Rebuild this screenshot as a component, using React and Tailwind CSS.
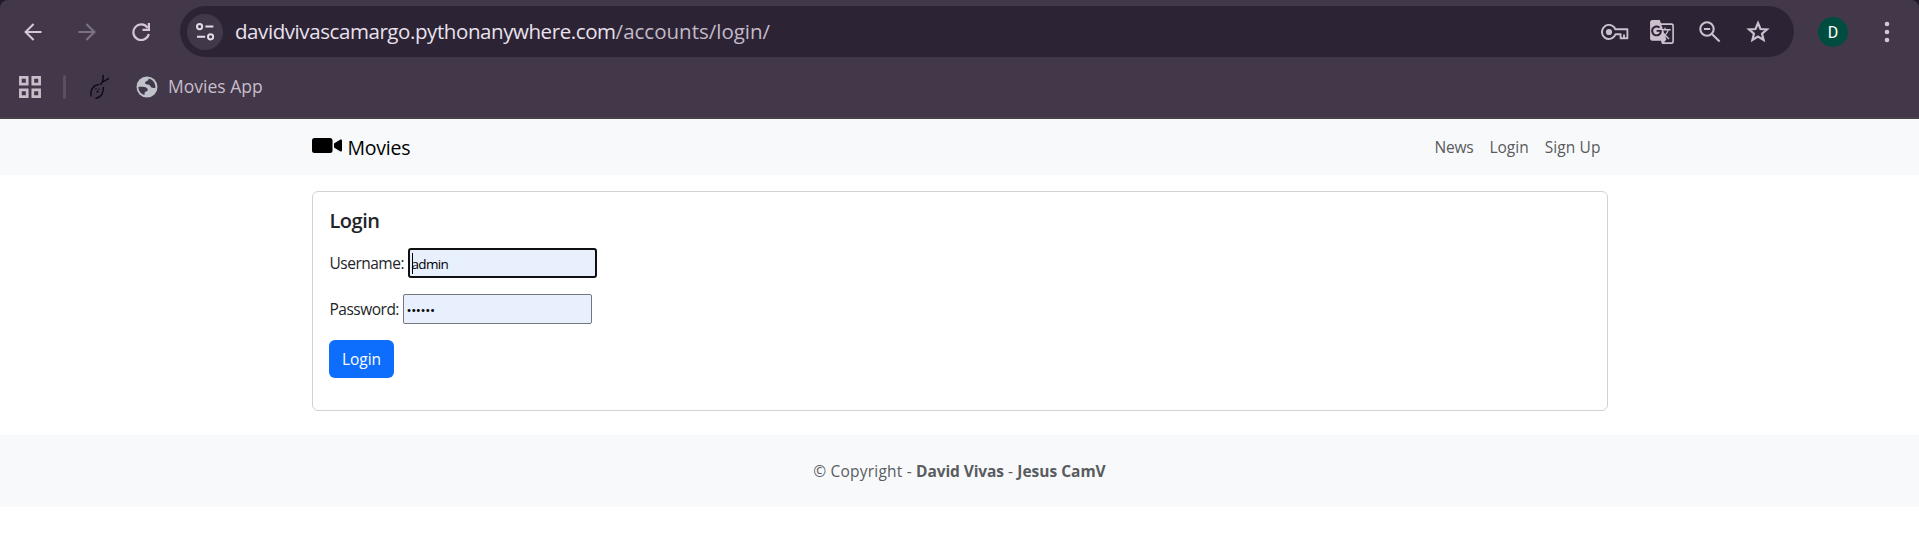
import { MdGTranslate } from 'react-icons/md';

const line = { fill: 'none', stroke: 'currentColor' };

function BackIcon({ className }) {
  return (
    <svg width="18" height="18" viewBox="0 0 18 18" className={className} {...line} strokeWidth="2.1">
      <path d="M17.5 9H2M9.6 1L1.6 9l8 8" />
    </svg>
  );
}

function ReloadIcon() {
  return (
    <svg width="18" height="18" viewBox="0 0 18 18" className="text-[#d5c5da]" {...line} strokeWidth="2.2">
      <path d="M15.6 4.8A7.8 7.8 0 1 0 16.8 11" />
      <path d="M16.9 0v6.9H10.5" />
    </svg>
  );
}

function TuneIcon() {
  return (
    <svg width="18" height="18" viewBox="0 0 18 18" {...line} strokeWidth="2">
      <circle cx="3.6" cy="3.6" r="2.6" />
      <path d="M9.4 3.6h8M1 13.8h8.2" />
      <circle cx="14.6" cy="13.8" r="2.6" />
    </svg>
  );
}

function KeyIcon() {
  return (
    <svg width="28" height="16" viewBox="0 0 28 16" {...line} strokeWidth="1.9" strokeLinejoin="round">
      <path d="M14.4 5.3H26.4V14.2H19.6V10.3H14.5A7 7 0 1 1 14.4 5.3Z" />
      <path d="M23 10.4v3.6" />
      <circle cx="8" cy="8" r="3.1" fill="currentColor" stroke="none" />
    </svg>
  );
}

function ZoomOutIcon() {
  return (
    <svg width="22" height="22" viewBox="0 0 22 22" {...line} strokeWidth="2.1">
      <circle cx="8" cy="8" r="6.7" />
      <path d="M12.9 12.9l7.7 7.7M4.9 8h6.2" />
    </svg>
  );
}

function StarIcon() {
  return (
    <svg width="24" height="23" viewBox="0 0 24 23" {...line} strokeWidth="2.2">
      <path d="M12 3l2.5 6 6.5.5-4.95 4.2 1.55 6.3L12 16.6 6.4 20l1.55-6.3L3 9.5 9.5 9z" />
    </svg>
  );
}

function AppsIcon() {
  return (
    <svg width="22" height="22" viewBox="0 0 22 22" {...line} strokeWidth="2.7">
      <path d="M1.4 1.4h6.8v6.8H1.4zM13.8 1.4h6.8v6.8h-6.8zM1.4 13.8h6.8v6.8H1.4zM13.8 13.8h6.8v6.8h-6.8z" />
    </svg>
  );
}

function SnakeIcon() {
  return (
    <svg width="22" height="26" viewBox="0 0 22 26" className="text-[#0d0a10]" {...line} strokeWidth="1.4" strokeLinecap="round">
      <path d="M3 21.8C2 16.8 4.6 11.6 10.6 10.4" />
      <path d="M15.3 13.4C15.8 18.6 13.4 23.4 8 24.3" />
      <path d="M15.2 1.5L14.8 7.2 12.6 10.4M20.5 4.6L14.8 8" />
      <path d="M8 14.6v.1M11 15.2v.1M9 17.7l1.2-.2" />
    </svg>
  );
}

function GlobeIcon() {
  return (
    <svg width="22" height="22" viewBox="0 0 22 22">
      <circle cx="11" cy="11" r="10.5" fill="#bfc3c9" />
      <path
        d="M12.6 2.5C12.9 4.2 11.2 5 9.9 5.6 8.6 6.4 8.9 7.9 10.2 8.3c2 .3 3.6.4 4.3 2 .4 1.4 1.9 1.9 4.8 1.6C19.9 7.4 17 3.6 12.6 2.5z"
        fill="#42384a"
      />
      <path
        d="M2.4 10.7h4.2c2.6 0 5 1 5.2 2.9.1 1.5-1.1 2-2.4 2.2-.9.3-.7 1.6-.9 3.2C4.7 17.8 2.3 14.6 2.4 10.7z"
        fill="#42384a"
      />
    </svg>
  );
}

function CameraIcon() {
  return (
    <svg width="30" height="15" viewBox="0 0 30 15" fill="#000">
      <rect width="20.5" height="15" rx="2.5" />
      <path d="M22 5.5L28 1.8c1-.6 2-.2 2 1v9.400c0 1.200-1 1.600-2 1L22 9.500z" />
    </svg>
  );
}

function BrowserBar() {
  return (
    <div className="h-[119px] bg-[#211a2b]">
      <header className="h-full rounded-t-[8px] border-b-2 border-[#4a4048] bg-[#42384a] pt-[6px]">
        <div className="flex h-[51px] items-center">
          <div className="flex w-[180px] items-center gap-9 pl-6 text-[#d5c5da]">
            <BackIcon />
            <BackIcon className="rotate-180 text-[#7c7284]" />
            <ReloadIcon />
          </div>
          <div className="flex h-full w-[1614px] items-center rounded-full bg-[#2c2435] pl-[7px] text-[#cbc0cc]">
            <div className="flex size-9 items-center justify-center rounded-full bg-[#42384a] text-[#e4dbe6]">
              <TuneIcon />
            </div>
            <div className="flex-1 pb-px pl-3 text-[20.5px] leading-7 whitespace-nowrap">
              <span className="tracking-[-0.42px] text-[#e9e1ec]">davidvivascamargo.pythonanywhere.com</span>
              <span className="text-[#c4bac8]">/accounts/login/</span>
            </div>
            <div className="flex items-center pr-[24px]">
              <KeyIcon />
              <MdGTranslate size={26} className="ml-5" />
              <div className="ml-6"><ZoomOutIcon /></div>
              <div className="ml-[25px]"><StarIcon /></div>
            </div>
          </div>
          <div className="ml-6 flex size-[30px] items-center justify-center rounded-full bg-[#004d40] pt-0.5 font-[Roboto] text-[16px] text-white">
            D
          </div>
          <svg width="6" height="22" viewBox="0 0 6 22" fill="#d5c5da" className="ml-[36px]">
            <circle cx="3" cy="3" r="2.3" />
            <circle cx="3" cy="11" r="2.3" />
            <circle cx="3" cy="19" r="2.3" />
          </svg>
        </div>
        <div className="flex h-[59px] items-center pl-[19px] text-[#c8bdc9]">
          <AppsIcon />
          <div className="ml-[22px] h-6 w-[3px] rounded-full bg-[#5a4f62]" />
          <div className="ml-[22px]"><SnakeIcon /></div>
          <div className="ml-[26px]"><GlobeIcon /></div>
          <span className="ml-[10px] pb-px text-[17.5px] leading-6">Movies App</span>
        </div>
      </header>
    </div>
  );
}

function Navbar() {
  return (
    <nav className="h-14 bg-[#f8f9fb]">
      <div className="mx-auto flex h-full w-[1296px] items-center justify-between">
        <a className="flex items-center text-black">
          <span className="mr-1.5 -mt-[3px]"><CameraIcon /></span>
          <span className="pt-0.5 text-[19.5px] tracking-[-0.25px]">Movies</span>
        </a>
        <div className="flex gap-4 pt-0.5 pr-[7px] text-[15.5px] text-[#595a5c]">
          <a className="tracking-[-0.2px]">News</a>
          <a>Login</a>
          <a className="tracking-[0.1px]">Sign Up</a>
        </div>
      </div>
    </nav>
  );
}

function LoginCard() {
  return (
    <section className="mx-auto mt-4 h-[220px] w-[1296px] rounded-md border border-[#d2d2d3] p-4 text-[#212529]">
      <h5 className="h-6 pt-px pl-px text-[20px] leading-6 font-semibold tracking-[-0.5px]">Login</h5>
      <div className="mt-4 flex items-center text-[15.5px]">
        <label className="w-[79px] pt-0.5 pl-px tracking-[-0.5px]">Username:</label>
        <div className="flex h-[30px] w-[189px] items-center rounded-[3px] border-2 border-[#101010] bg-[#e8f0fe] pl-[2px] text-[13.5px] text-black">
          <span className="h-[21px] w-px bg-black" />
          <span className="-ml-px pt-0.5 tracking-[-0.65px]">admin</span>
        </div>
      </div>
      <div className="mt-4 flex items-center text-[15.5px]">
        <label className="w-[74px] pt-0.5 pl-px tracking-[-0.5px]">Password:</label>
        <div className="flex h-[30px] w-[189px] items-center rounded-[2px] border border-[#767680] bg-[#e8f0fe] pt-0.5 pl-[3px] text-[13.5px] tracking-[-0.4px] text-black">
          ••••••
        </div>
      </div>
      <button className="mt-4 flex h-[38px] w-[65px] items-center justify-center rounded-md bg-[#0d6efd] pt-0.5 pl-px text-[15.5px] text-white">
        Login
      </button>
    </section>
  );
}

export default function App() {
  return (
    <div className="h-[559px] overflow-hidden bg-white font-['Open_Sans',sans-serif]">
      <BrowserBar />
      <Navbar />
      <LoginCard />
      <footer className="mt-6 flex h-[72px] items-center justify-center bg-[#f8f9fb] pt-0.5 text-[15.5px] whitespace-pre text-[#595c5f]">
        <span className="tracking-[0.2px]">© Copyright - </span>
        <b className="tracking-[-0.1px]">David Vivas</b>
        <span className="tracking-[0.1px]"> - </span>
        <b>Jesus CamV</b>
      </footer>
    </div>
  );
}
